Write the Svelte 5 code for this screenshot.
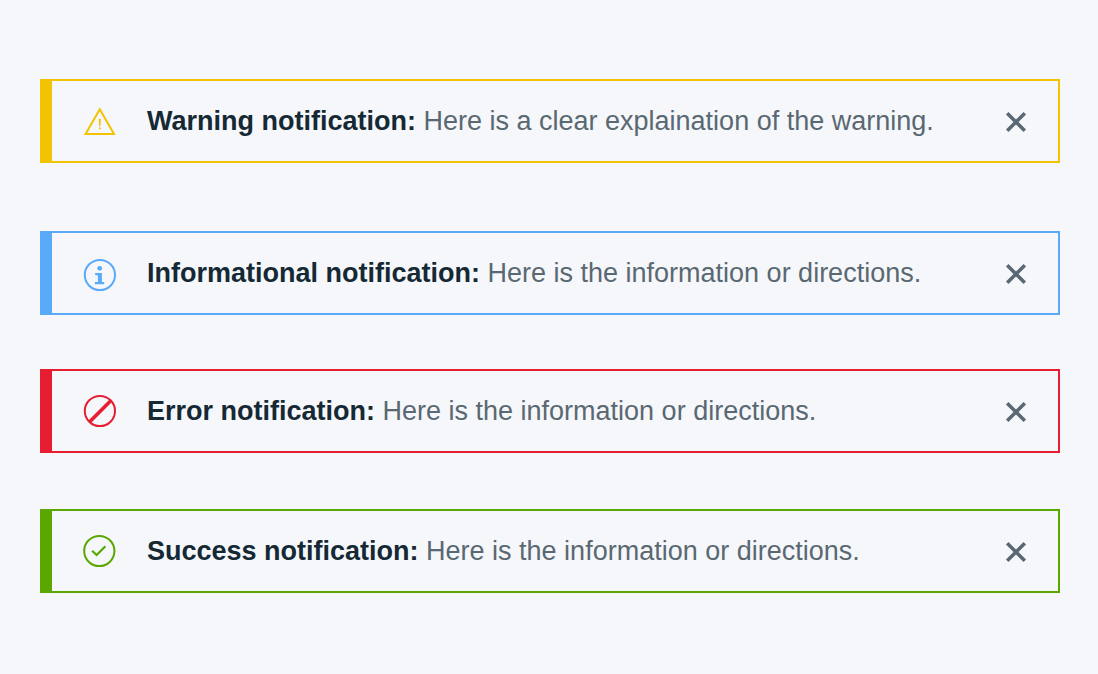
<script>
  const notices = [
    { kind: 'warning', title: 'Warning notification:', text: 'Here is a clear explaination of the warning.' },
    { kind: 'info', title: 'Informational notification:', text: 'Here is the information or directions.' },
    { kind: 'error', title: 'Error notification:', text: 'Here is the information or directions.' },
    { kind: 'success', title: 'Success notification:', text: 'Here is the information or directions.' }
  ];
</script>

<main>
  {#each notices as n}
    <section class="notice {n.kind}">
      <svg class="icon" viewBox="0 -2 34 38" fill="none" stroke="currentColor" stroke-width="2" aria-hidden="true">
        {#if n.kind === 'warning'}
          <path d="M16.800 5.300 L31 30 H2.600 Z" />
          <path d="M15.700 15h2.200l-.5 7.200h-1.200z M15.900 23.400h1.800v1.900h-1.800z" fill="currentColor" stroke="none" />
        {:else if n.kind === 'info'}
          <circle cx="16.900" cy="19" r="15.100" />
          <g fill="currentColor" stroke="none">
            <circle cx="16.700" cy="12.300" r="2.400" />
            <path d="M12.200 17h6.700v9h2.300v2.200h-9.300V26h3v-6.800h-2.700z" />
          </g>
        {:else if n.kind === 'error'}
          <circle cx="16.900" cy="17" r="15.100" />
          <path d="M6.700 27.700 L27.500 6.900" stroke-width="3.600" />
        {:else}
          <circle cx="16.300" cy="17" r="15.100" />
          <path d="M9.100 16.700 L13.600 21 L22.400 12.200" stroke-width="2.200" />
        {/if}
      </svg>
      <p><strong>{n.title}</strong> {n.text}</p>
      <button type="button" aria-label="Dismiss">
        <svg viewBox="0 0 22 22" fill="none" stroke="currentColor" stroke-width="3.500" aria-hidden="true"><path d="M2.200 2.200 L19.800 19.800 M19.800 2.200 L2.200 19.800" /></svg>
      </button>
    </section>
  {/each}
</main>

<style>
  :global(body) { margin: 0; background: #f5f7fb; }
  main { padding: 79px 38px 81px 40px; font-family: "Liberation Sans", Arial, sans-serif; }
  .notice { box-sizing: border-box; display: flex; align-items: center; min-height: 84px; padding: 0 31px; border: 2px solid; border-left-width: 12px; }
  .notice + .notice { margin-top: 56px; }
  .notice.info { margin-top: 68px; }
  .notice.error { margin-top: 54px; }
  .warning { border-color: #f1c300; }
  .warning .icon { color: #f1c300; }
  .info { border-color: #5aaafa; }
  .info .icon { color: #5aaafa; }
  .error { border-color: #e71d32; }
  .error .icon { color: #e71d32; }
  .success { border-color: #5aa700; }
  .success .icon { color: #5aa700; }
  .icon { flex: none; width: 34px; height: 38px; margin-right: 30px; }
  p { flex: 1; margin: 0; color: #5a6872; font-size: 27px; line-height: 32px; }
  strong { color: #152935; }
  button { display: flex; padding: 2px 0 0; border: 0; background: none; color: #5a6872; cursor: pointer; }
  button svg { width: 22px; height: 22px; }
</style>
